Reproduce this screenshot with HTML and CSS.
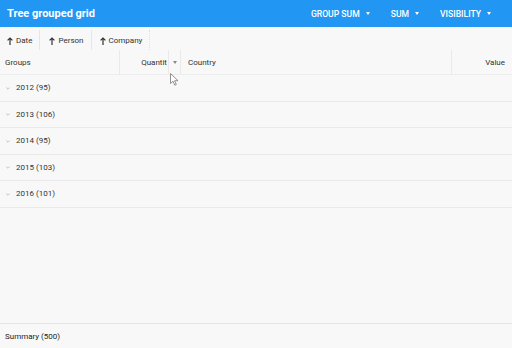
FILE: index.html
```html
<!DOCTYPE html>
<html lang="en">

<head>
    <meta charset="UTF-8">
    <title>Tree grouped grid</title>
    <link rel="stylesheet" href="styles.css">
</head>

<body>
    <div class="app">
        <div class="toolbar">
            <div class="toolbar-title">Tree grouped grid</div>
            <div class="toolbar-menu">
                <span class="toolbar-btn">Group sum <i class="caret"></i></span>
                <span class="toolbar-btn">Sum <i class="caret"></i></span>
                <span class="toolbar-btn">Visibility <i class="caret"></i></span>
            </div>
        </div>

        <div class="group-panel">
            <span class="group-chip"><svg class="arrow" width="6" height="8" viewBox="0 0 6 8"><path d="M3 8V1M0.6 3.4L3 1L5.4 3.4" fill="none" stroke="#333" stroke-width="1.2"/></svg>Date</span>
            <span class="group-chip"><svg class="arrow" width="6" height="8" viewBox="0 0 6 8"><path d="M3 8V1M0.6 3.4L3 1L5.4 3.4" fill="none" stroke="#333" stroke-width="1.2"/></svg>Person</span>
            <span class="group-chip"><svg class="arrow" width="6" height="8" viewBox="0 0 6 8"><path d="M3 8V1M0.6 3.4L3 1L5.4 3.4" fill="none" stroke="#333" stroke-width="1.2"/></svg>Company</span>
        </div>

        <div class="grid-head">
            <div class="cell col-groups">Groups</div>
            <div class="cell col-qty">Quantit</div>
            <div class="cell col-menu"><i class="caret dark"></i></div>
            <div class="cell col-country">Country</div>
            <div class="cell col-value">Value</div>
            <svg class="pointer" width="9" height="13" viewBox="0 0 9 13">
                <path d="M0.5 0.5 L0.5 10.5 L3 8.2 L4.8 12.2 L6.3 11.5 L4.6 7.7 L8 7.7 Z" fill="#fff" stroke="#777" stroke-width="0.8"/>
            </svg>
        </div>

        <div class="grid-body">
            <div class="group-row"><svg class="chev" width="4" height="3" viewBox="0 0 4 3"><path d="M0.3 0.5L2 2.2L3.7 0.5" fill="none" stroke="#aaa" stroke-width="0.7"/></svg>2012 (95)</div>
            <div class="group-row"><svg class="chev" width="4" height="3" viewBox="0 0 4 3"><path d="M0.3 0.5L2 2.2L3.7 0.5" fill="none" stroke="#aaa" stroke-width="0.7"/></svg>2013 (106)</div>
            <div class="group-row"><svg class="chev" width="4" height="3" viewBox="0 0 4 3"><path d="M0.3 0.5L2 2.2L3.7 0.5" fill="none" stroke="#aaa" stroke-width="0.7"/></svg>2014 (95)</div>
            <div class="group-row"><svg class="chev" width="4" height="3" viewBox="0 0 4 3"><path d="M0.3 0.5L2 2.2L3.7 0.5" fill="none" stroke="#aaa" stroke-width="0.7"/></svg>2015 (103)</div>
            <div class="group-row"><svg class="chev" width="4" height="3" viewBox="0 0 4 3"><path d="M0.3 0.5L2 2.2L3.7 0.5" fill="none" stroke="#aaa" stroke-width="0.7"/></svg>2016 (101)</div>
        </div>

        <div class="grid-foot">Summary (500)</div>
    </div>
</body>

</html>
```

FILE: styles.css
```css
* {
    margin: 0;
    padding: 0;
    box-sizing: border-box;
}

body {
    font-family: Roboto, "Liberation Sans", sans-serif;
    background-color: #f8f8f8;
    color: #333;
}

.app {
    width: 512px;
    height: 348px;
    display: flex;
    flex-direction: column;
}

.toolbar {
    height: 27px;
    background-color: #2196f3;
    color: #fff;
    display: flex;
    align-items: center;
    padding: 0 0 0 7px;
}

.toolbar-title {
    font-size: 11px;
    font-weight: 700;
    flex: 1;
}

.toolbar-menu {
    display: flex;
    gap: 21px;
    padding-right: 21px;
}

.toolbar-btn {
    font-size: 8.6px;
    font-weight: 500;
    text-transform: uppercase;
    display: flex;
    align-items: center;
    gap: 6px;
}

.caret {
    display: inline-block;
    width: 0;
    height: 0;
    border-left: 2.5px solid transparent;
    border-right: 2.5px solid transparent;
    border-top: 3px solid #fff;
}

.caret.dark {
    border-top-color: #888;
}

.group-panel {
    height: 23px;
    display: flex;
    font-size: 8px;
    padding-top: 3px;
}

.group-chip {
    display: flex;
    align-items: center;
    padding: 1px 7px 0;
    gap: 3px;
    border-right: 1px solid #e6e6e6;
}

.group-chip:nth-child(2) {
    padding-left: 9px;
}

.group-chip:nth-child(3) {
    padding-left: 8px;
}

.group-chip:last-child {
    border-right: 1px dotted #e0e0e0;
}

.grid-head {
    height: 25px;
    display: flex;
    font-size: 8px;
    border-bottom: 1px solid #ececec;
    position: relative;
}

.cell {
    display: flex;
    align-items: center;
    border-right: 1px solid #eaeaea;
}

.col-groups {
    width: 120px;
    padding-left: 5px;
}

.col-qty {
    width: 49px;
    justify-content: flex-end;
    padding-right: 1px;
}

.col-menu {
    width: 12px;
    justify-content: center;
}

.col-country {
    width: 271px;
    padding-left: 7px;
}

.col-value {
    flex: 1;
    justify-content: flex-end;
    padding-right: 7px;
    border-right: none;
}

.pointer {
    position: absolute;
    left: 170px;
    top: 23px;
}

.grid-body {
    flex: 1;
    font-size: 8px;
}

.group-row {
    height: 26.5px;
    display: flex;
    align-items: center;
    padding-left: 6px;
    border-bottom: 1px solid #eaeaea;
}

.chev {
    margin-right: 6px;
    margin-top: 1px;
}

.grid-foot {
    height: 25px;
    border-top: 1px solid #e6e6e6;
    display: flex;
    align-items: center;
    padding-left: 5px;
    font-size: 8px;
    color: #222;
}
```
